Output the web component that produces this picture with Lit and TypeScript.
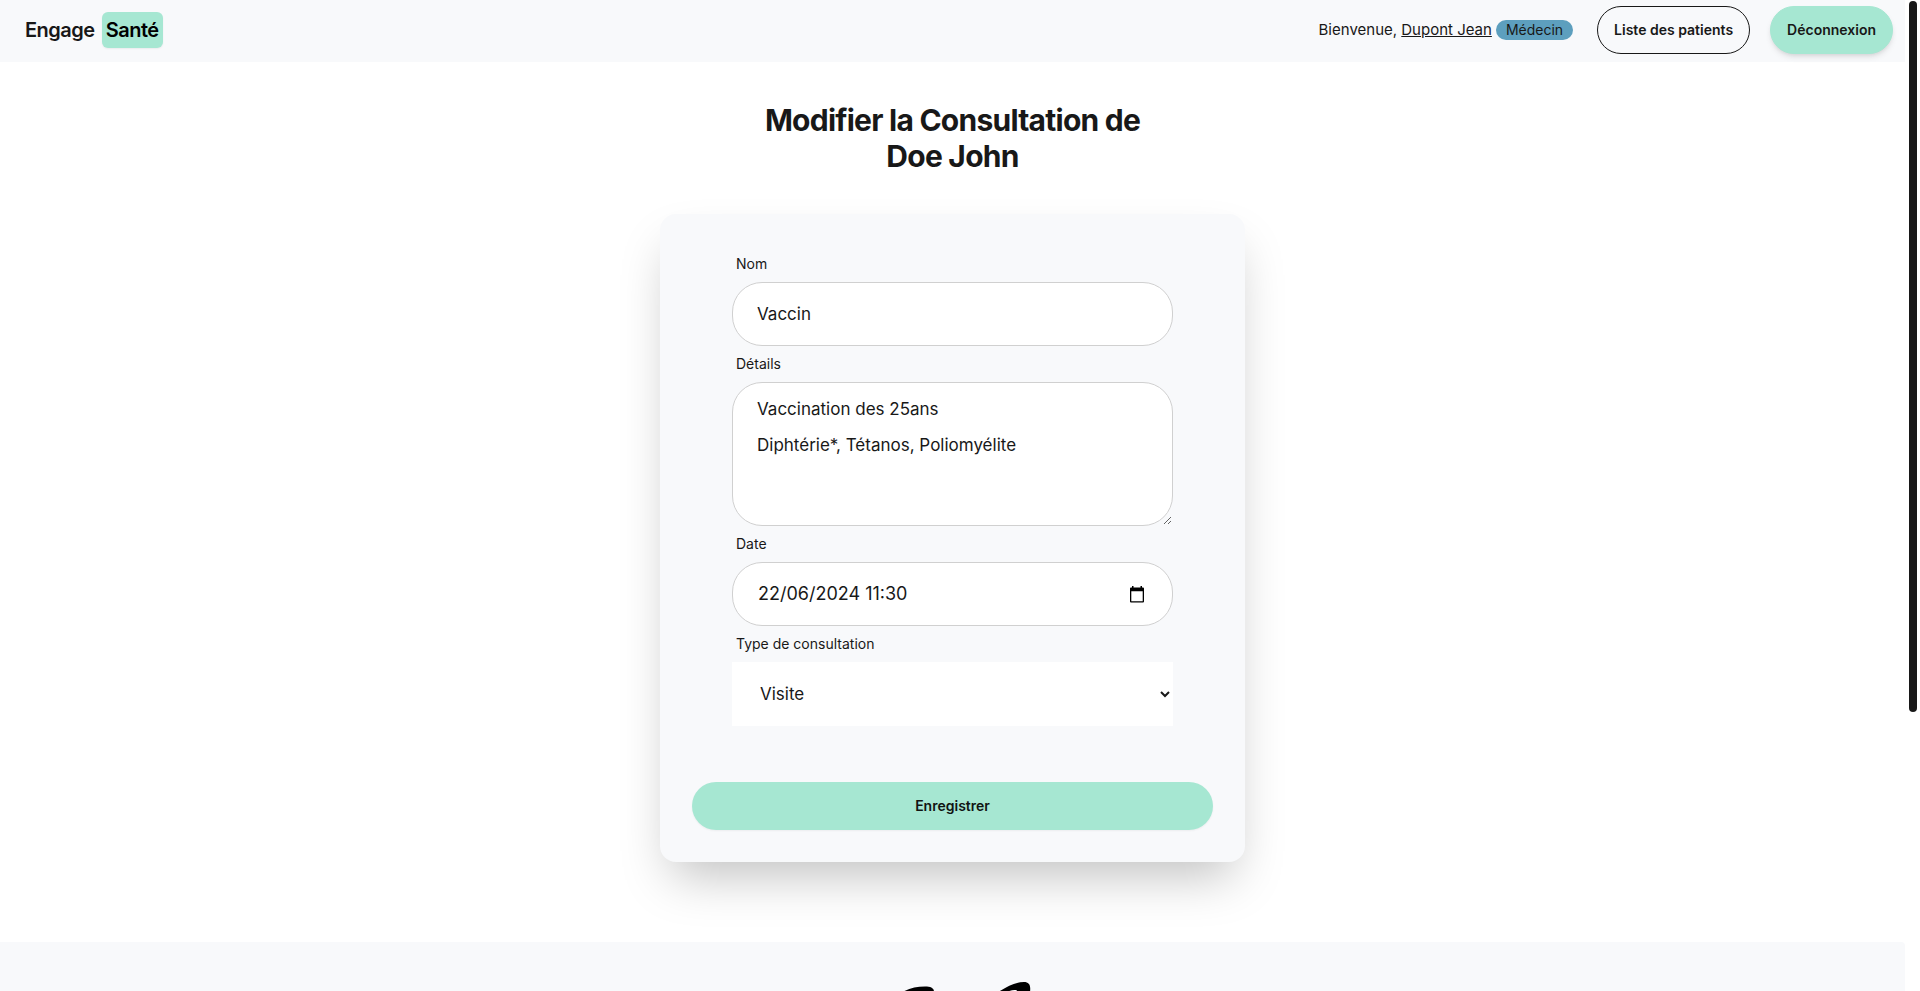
import { LitElement, html, css } from "lit";
import { customElement, state } from "lit/decorators.js";

@customElement("app-header")
class AppHeader extends LitElement {
  static styles = css`
    :host {
      display: block;
      background: #f8f9fb;
    }
    * {
      box-sizing: border-box;
    }
    .bar {
      display: flex;
      align-items: center;
      justify-content: space-between;
      min-height: 62px;
      padding: 6px 12px 8px 25px;
    }
    .brand {
      display: flex;
      align-items: center;
      gap: 7px;
      color: #181818;
      font-size: 20px;
      font-weight: 600;
      line-height: 28px;
      text-decoration: none;
      letter-spacing: -0.025em;
    }
    .mark {
      padding: 4px;
      border-radius: 6px;
      background: #a6e7d2;
      color: #000;
      box-shadow: 0 1px 2px rgba(0, 0, 0, 0.06);
    }
    .actions {
      display: flex;
      align-items: center;
    }
    .welcome {
      display: flex;
      align-items: center;
      gap: 4px;
      margin: 0 24px 0 0;
      font-size: 15px;
      line-height: 24px;
    }
    .welcome a {
      color: inherit;
      text-decoration: underline;
    }
    .role {
      height: 20px;
      padding: 0 10px;
      border-radius: 10px;
      background: #5d9fbe;
      font-size: 14px;
      line-height: 20px;
    }
    .btn {
      height: 48px;
      padding: 0 16px;
      border: 1px solid #181818;
      border-radius: 24px;
      background: transparent;
      color: #181818;
      font: 600 14px/14px Inter, sans-serif;
      white-space: nowrap;
      cursor: pointer;
    }
    .primary {
      margin-left: 20px;
      border-color: #a6e7d2;
      background: #a6e7d2;
      box-shadow: 0 4px 6px -1px rgba(0, 0, 0, 0.1), 0 2px 4px -2px rgba(0, 0, 0, 0.1);
    }
  `;

  render() {
    return html`
      <header class="bar">
        <a class="brand" href="#">Engage <span class="mark">Santé</span></a>
        <nav class="actions">
          <p class="welcome">
            <span>Bienvenue, <a href="#">Dupont Jean</a></span>
            <span class="role">Médecin</span>
          </p>
          <button class="btn" type="button">Liste des patients</button>
          <button class="btn primary" type="button">Déconnexion</button>
        </nav>
      </header>
    `;
  }
}

@customElement("consultation-form")
class ConsultationForm extends LitElement {
  static styles = css`
    :host {
      display: block;
      width: 100%;
      max-width: 585px;
    }
    * {
      box-sizing: border-box;
    }
    .card {
      display: flex;
      flex-direction: column;
      gap: 56px;
      padding: 32px;
      border-radius: 16px;
      background: #f8f9fb;
      box-shadow: 0 25px 50px -12px rgba(0, 0, 0, 0.25);
    }
    .fields {
      display: flex;
      flex-direction: column;
      padding: 0 40px;
    }
    label {
      padding: 8px 4px;
      font-size: 14px;
      line-height: 20px;
    }
    .control {
      width: 100%;
      height: 64px;
      margin: 0;
      padding: 0 24px;
      border: 1px solid #d0d0d0;
      border-radius: 30px;
      background: #fff;
      color: #181818;
      font: 400 17px/36px Inter, sans-serif;
    }
    .area {
      display: block;
      height: 144px;
      padding: 8px 24px;
      resize: vertical;
    }
    .date {
      display: flex;
      align-items: center;
      padding-right: 28px;
      font-size: 18px;
    }
    .date input {
      flex: 1;
      min-width: 0;
      padding: 0 1px;
      border: 0;
      outline: 0;
      background: transparent;
      color: inherit;
      font: inherit;
    }
    .picker {
      display: flex;
      padding: 0;
      border: 0;
      background: none;
      color: #000;
      cursor: pointer;
    }
    .picker svg {
      width: 14px;
      height: 17px;
    }
    .select {
      border: 0;
      border-radius: 0;
    }
    .submit {
      height: 48px;
      border: 0;
      border-radius: 24px;
      background: #a6e7d2;
      color: #101412;
      font: 600 14px/14px Inter, sans-serif;
      box-shadow: 0 1px 2px rgba(0, 0, 0, 0.05);
      cursor: pointer;
    }
  `;

  @state() private name = "Vaccin";
  @state() private details = "Vaccination des 25ans\nDiphtérie*, Tétanos, Poliomyélite";
  @state() private date = "22/06/2024 11:30";

  render() {
    return html`
      <form class="card" @submit=${(e: Event) => e.preventDefault()}>
        <div class="fields">
          <label for="name">Nom</label>
          <input class="control" id="name" type="text" .value=${this.name} />
          <label for="details">Détails</label>
          <textarea class="control area" id="details" .value=${this.details}></textarea>
          <label for="date">Date</label>
          <div class="control date">
            <input id="date" type="text" inputmode="numeric" .value=${this.date} />
            <button class="picker" type="button" aria-label="Choisir une date">
              <svg viewBox="0 0 14 17" aria-hidden="true">
                <path
                  fill="currentColor"
                  fill-rule="evenodd"
                  d="M2 0h1.500v1.500h7V0H12v1.500h1A1 1 0 0 1 14 2.500v13a1 1 0 0 1-1 1H1a1 1 0 0 1-1-1v-13a1 1 0 0 1 1-1h1zM1.300 5.300v9.900h11.400V5.300z"
                />
              </svg>
            </button>
          </div>
          <label for="type">Type de consultation</label>
          <select class="control select" id="type">
            <option selected>Visite</option>
            <option>Urgence</option>
            <option>Suivi</option>
          </select>
        </div>
        <button class="submit" type="submit">Enregistrer</button>
      </form>
    `;
  }
}

@customElement("app-root")
class AppRoot extends LitElement {
  static styles = css`
    :host {
      display: grid;
      grid-template-columns: minmax(0, 1fr) 15px;
      height: 100vh;
      overflow: hidden;
      background: #fff;
      color: #181818;
      font: 400 16px/24px Inter, sans-serif;
    }
    .page {
      display: flex;
      flex-direction: column;
      overflow: hidden;
    }
    .page > * {
      flex-shrink: 0;
    }
    main {
      display: flex;
      flex-direction: column;
      align-items: center;
      gap: 40px;
      padding: 40px 0 80px;
    }
    h1 {
      max-width: 448px;
      margin: 0;
      font-size: 30px;
      font-weight: 700;
      line-height: 36px;
      text-align: center;
      letter-spacing: -0.025em;
    }
    footer {
      display: flex;
      justify-content: center;
      padding: 40px;
      border-top-right-radius: 4px;
      background: #f8f9fb;
    }
    .logo {
      width: 160px;
      height: 80px;
    }
    .rail {
      padding: 1px 3px 0 4px;
    }
    .thumb {
      height: 71.8%;
      border-radius: 4px;
      background: #181818;
    }
  `;

  render() {
    return html`
      <div class="page">
        <app-header></app-header>
        <main>
          <h1>Modifier la Consultation de<br />Doe John</h1>
          <consultation-form></consultation-form>
        </main>
        <footer>
          <svg class="logo" viewBox="0 0 160 80" role="img" aria-label="Engage Santé">
            <path d="M28 11C35 6.500 43 4.500 52 4.500C58 4.500 61 6 61 10L48 48L30 40Z" />
            <path
              fill-rule="evenodd"
              d="M124 11C134 4 143 0 151 0C156 0 158 3 157 10L138 60L112 50ZM134 10C138 8 142 7.500 144 8.500L138 30Z"
            />
          </svg>
        </footer>
      </div>
      <div class="rail" aria-hidden="true"><div class="thumb"></div></div>
    `;
  }
}
